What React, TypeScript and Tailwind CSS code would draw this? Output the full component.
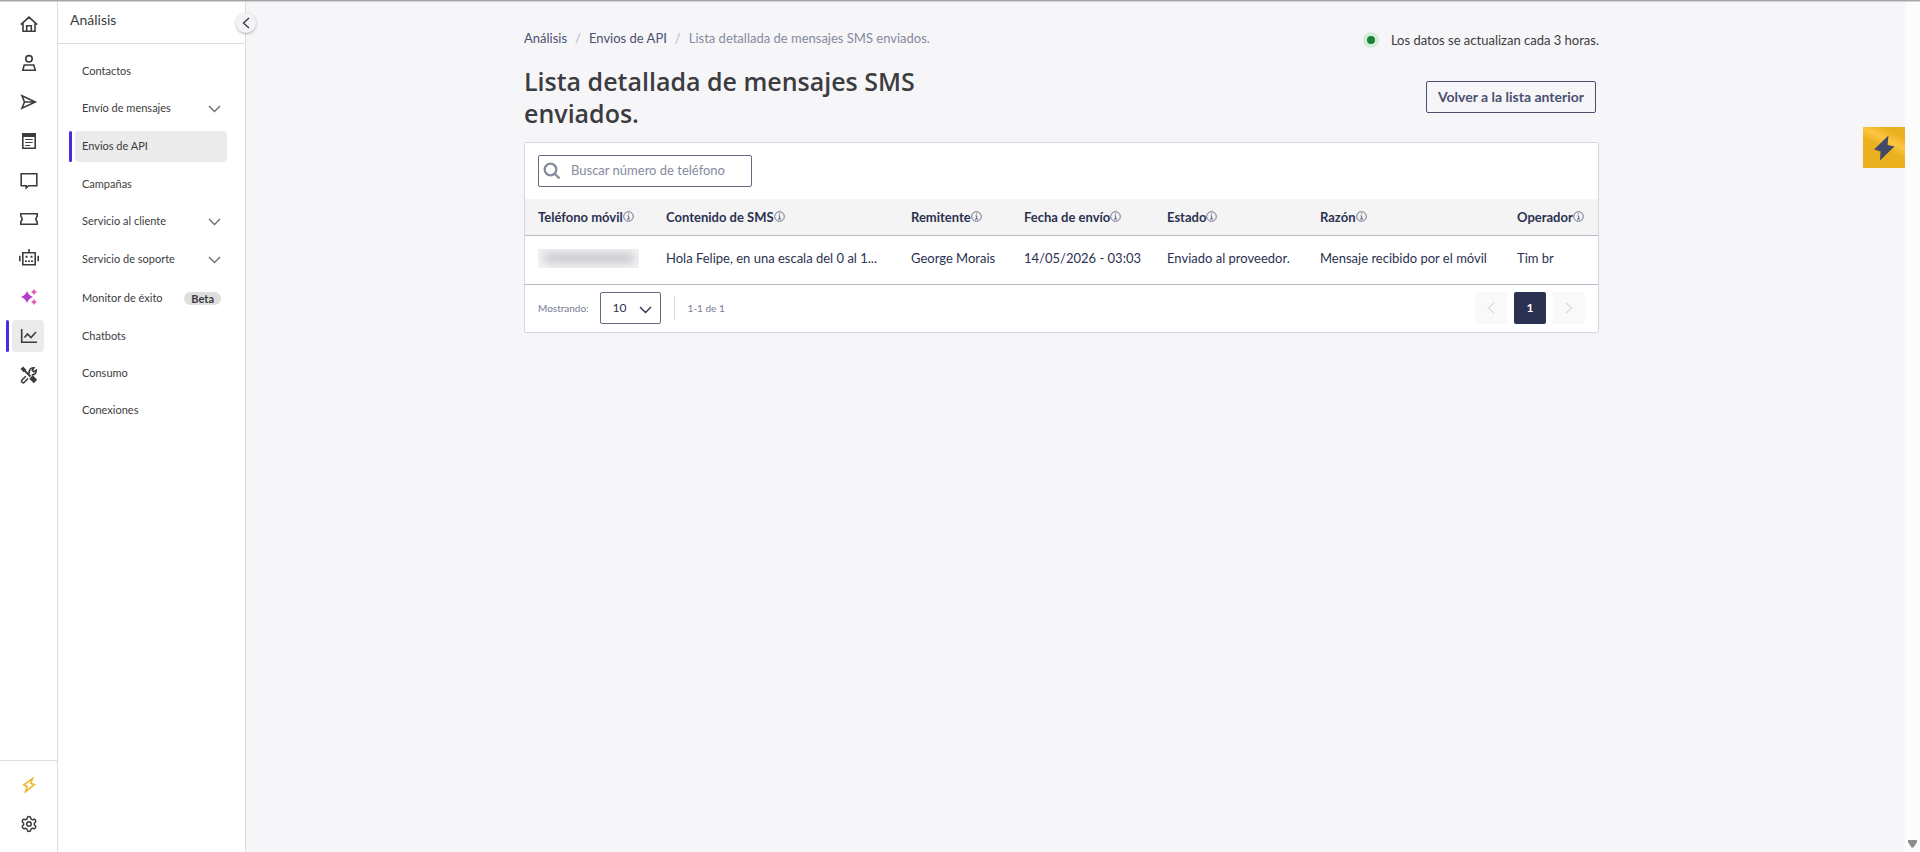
import type { ReactNode } from "react";
import { Settings } from "lucide-react";

function Glyph({ children }: { children: ReactNode }) {
  return (
    <svg width="20" height="20" viewBox="0 0 20 20" fill="none" stroke="currentColor" strokeWidth="1.6" aria-hidden="true">
      {children}
    </svg>
  );
}

const railItems: { label: string; icon: ReactNode; active?: boolean }[] = [
  {
    label: "Inicio",
    icon: (
      <Glyph>
        <path d="M1.8 10.6 10 3.2l8.2 7.4M4 9v8.3h12V9M7.7 17.3v-5.6h4.6v5.6" />
      </Glyph>
    ),
  },
  {
    label: "Contactos",
    icon: (
      <Glyph>
        <circle cx="10" cy="5.8" r="3.2" />
        <path d="M5.2 12h9.6l1.4 5.3H3.8z" />
      </Glyph>
    ),
  },
  {
    label: "Envíos",
    icon: (
      <Glyph>
        <path d="M3 3.8 16.3 10 3 16.2 5.5 10zM5.5 10h10.8" />
      </Glyph>
    ),
  },
  {
    label: "Campañas",
    icon: (
      <Glyph>
        <path d="M3.8 3v14.2h12.4V3" />
        <path d="M3 4h14" strokeWidth="4" />
        <path d="M6.3 8.5h7.4M6.3 11.500h7.4M6.3 14.500h4.800" strokeWidth="1.2" />
      </Glyph>
    ),
  },
  {
    label: "Conversaciones",
    icon: (
      <Glyph>
        <path d="M2.2 3.7h15.6v12H9.6L7.2 18v-2.3h-5z" />
      </Glyph>
    ),
  },
  {
    label: "Tickets",
    icon: (
      <Glyph>
        <path d="M1.8 4.7h16.4v2.6q-2.6 2.7 0 5.4v2.6H1.8v-2.6q2.6-2.7 0-5.4z" />
      </Glyph>
    ),
  },
  {
    label: "Chatbots",
    icon: (
      <Glyph>
        <path d="M3.8 4.8h12.4v11.9H3.8zM10 1v4" />
        <path d="M.8 7.8v5.4M19.2 7.8v5.4" />
        <path d="M6.5 8.7h2M11.5 8.7h2" strokeWidth="2" />
        <path d="M6 13.2h8" strokeDasharray="2 1" />
      </Glyph>
    ),
  },
  {
    label: "Inteligencia artificial",
    icon: (
      <Glyph>
        <g stroke="none">
          <path d="M8 4q1.500 4.500 6 6-4.500 1.500-6 6-1.500-4.500-6-6 4.500-1.500 6-6z" fill="#b03cc9" />
          <path d="M15 2q.8 2.200 3 3-2.200.8-3 3-.8-2.200-3-3 2.200-.8 3-3z" fill="#e45ab4" />
          <path d="M15 12q.8 2.200 3 3-2.200.8-3 3-.8-2.200-3-3 2.200-.8 3-3z" fill="#e45ab4" />
        </g>
      </Glyph>
    ),
  },
  {
    label: "Análisis",
    active: true,
    icon: (
      <Glyph>
        <path d="M2.700 3v13.300H18" />
        <path d="m5.500 11.500 3-3.500 3.500 3.500 5-5.500" />
      </Glyph>
    ),
  },
  {
    label: "Herramientas",
    icon: (
      <Glyph>
        <path d="M2.800 2.800 6 6" strokeWidth="3.600" />
        <path d="m5 5 6.500 6.500" strokeWidth="1.800" />
        <path d="m12 12 4.500 4.500" strokeWidth="4.800" />
        <path d="M8.600 9.600 10.400 7.800a4 4 0 0 1 4.500-5l-1.700 2.400 1.500 1.600 2.500-1.700a4 4 0 0 1-4.500 4.700M6.800 11.200 3 15a1.500 1.500 0 0 0 2.300 2.200l3.700-3.700" />
      </Glyph>
    ),
  },
];

const menuItems: { label: string; expandable?: boolean; active?: boolean; badge?: string }[] = [
  { label: "Contactos" },
  { label: "Envío de mensajes", expandable: true },
  { label: "Envios de API", active: true },
  { label: "Campañas" },
  { label: "Servicio al cliente", expandable: true },
  { label: "Servicio de soporte", expandable: true },
  { label: "Monitor de éxito", badge: "Beta" },
  { label: "Chatbots" },
  { label: "Consumo" },
  { label: "Conexiones" },
];

const columns = [
  { label: "Teléfono móvil", width: "w-[141px]" },
  { label: "Contenido de SMS", width: "w-[245px]" },
  { label: "Remitente", width: "w-[113px]" },
  { label: "Fecha de envío", width: "w-[143px]" },
  { label: "Estado", width: "w-[153px]" },
  { label: "Razón", width: "w-[197px]" },
  { label: "Operador", width: "" },
];

const row = [
  "Hola Felipe, en una escala del 0 al 1...",
  "George Morais",
  "14/05/2026 - 03:03",
  "Enviado al proveedor.",
  "Mensaje recibido por el móvil",
  "Tim br",
];

function itemHeight(item: { expandable?: boolean; active?: boolean; badge?: string }) {
  if (item.badge) return "h-8";
  return item.expandable || item.active ? "h-[31px]" : "h-[30px]";
}

function Chevron({ className }: { className?: string }) {
  return (
    <svg width="13" height="8" viewBox="0 0 13 8" fill="none" stroke="currentColor" strokeWidth="1.4" className={className} aria-hidden="true">
      <path d="m1 1 5.5 5.5L12 1" />
    </svg>
  );
}

function SideChevron({ right = false }: { right?: boolean }) {
  return (
    <svg width="8" height="12" viewBox="0 0 8 12" fill="none" stroke="currentColor" strokeWidth="1.4" aria-hidden="true">
      <path d={right ? "m1 1 5.5 5L1 11" : "M7 1 1.5 6 7 11"} />
    </svg>
  );
}

function InfoIcon() {
  return (
    <svg width="11" height="11" viewBox="0 0 11 11" fill="none" stroke="#5d6379" aria-hidden="true">
      <circle cx="5.5" cy="5.5" r="4.8" strokeWidth="0.9" />
      <path d="M4.500 4.900h1.200v3M4 8h3M5 2.900h1.100" />
    </svg>
  );
}

function Rail() {
  return (
    <nav aria-label="Principal" className="flex w-[58px] shrink-0 flex-col border-r border-[#dcdce2] bg-white">
      <ul className="flex flex-col gap-[7px] pt-[6px]">
        {railItems.map((item) => (
          <li key={item.label} className="flex gap-[3px] pl-[6px]">
            <span className={item.active ? "w-[3px] rounded-sm bg-[#4a2be0]" : "w-[3px]"} />
            <a
              href="#"
              aria-label={item.label}
              className={
                item.active
                  ? "flex size-8 items-center justify-center rounded bg-[#ebebeb] pl-[2px]"
                  : "flex size-8 items-center justify-center pl-[2px]"
              }
            >
              {item.icon}
            </a>
          </li>
        ))}
      </ul>
      <div className="mt-auto flex flex-col items-center gap-[7px] border-t border-[#dcdce2] pt-2 pb-3">
        <a href="#" aria-label="Novedades" className="flex size-8 items-center justify-center text-[#f0b428]">
          <Glyph>
            <path d="M13.500 3.700 4.800 9.900l3.200 1.600-1.300 5L15.300 9.600l-3.600-1.200z" />
          </Glyph>
        </a>
        <a href="#" aria-label="Configuración" className="flex size-8 items-center justify-center">
          <Settings size={18} strokeWidth={2} />
        </a>
      </div>
    </nav>
  );
}

function Sidebar() {
  return (
    <aside className="relative w-[188px] shrink-0 border-r border-[#dcdce2] bg-white">
      <h2 className="h-[42px] border-b border-[#dcdce2] pt-2 pl-3 text-sm leading-5">Análisis</h2>
      <ul className="flex flex-col gap-[7px] pt-3 pr-[18px] pl-[11px] text-[11px]">
        {menuItems.map((item) => (
          <li key={item.label} className={`flex gap-[3px] ${itemHeight(item)}`}>
            <span className={item.active ? "w-[3px] rounded-sm bg-[#4a2be0]" : "w-[3px]"} />
            <a
              href="#"
              className={
                item.active
                  ? "flex flex-1 items-center justify-between rounded bg-[#ebebeb] pr-[6px] pl-[7px]"
                  : "flex flex-1 items-center justify-between pr-[6px] pl-[7px]"
              }
            >
              {item.label}
              {item.expandable && <Chevron className="text-[#6d6d72]" />}
              {item.badge && (
                <span className="rounded-full bg-[#dedede] px-[7px] leading-[13px] font-bold">{item.badge}</span>
              )}
            </a>
          </li>
        ))}
      </ul>
      <button
        type="button"
        aria-label="Contraer menú"
        className="absolute top-[11px] -right-[11px] flex size-5 items-center justify-center rounded-full bg-[#f4f4f6] pr-px shadow-[0_1px_3px_rgba(0,0,0,0.3)]"
      >
        <SideChevron />
      </button>
    </aside>
  );
}

function MessagesCard() {
  return (
    <section className="rounded-xs border border-[#d5d6df] bg-white">
      <div className="px-[13px] py-3">
        <label className="flex h-8 w-[214px] items-center rounded-xs border border-[#656b85] pl-1">
          <svg width="18" height="18" viewBox="0 0 18 18" fill="none" stroke="#858a9e" strokeWidth="2.3" className="shrink-0" aria-hidden="true">
            <circle cx="7.5" cy="7.5" r="5.8" />
            <path d="m12 12 4.5 4.5" />
          </svg>
          <input
            type="search"
            aria-label="Buscar número de teléfono"
            placeholder="Buscar número de teléfono"
            className="ml-[10px] w-full min-w-0 text-[13px] outline-none placeholder:text-[#858a9e]"
          />
        </label>
      </div>
      <table className="w-full table-fixed text-left text-[13px] leading-5 text-[#2b3150]">
        <thead className="bg-[#f4f4f4]">
          <tr className="h-[36px] border-b border-[#b8bac8]">
            {columns.map((column) => (
              <th key={column.label} className={`${column.width} p-0 font-bold whitespace-nowrap first:pl-[13px]`}>
                <span className="flex items-center">
                  {column.label}
                  <InfoIcon />
                </span>
              </th>
            ))}
          </tr>
        </thead>
        <tbody>
          <tr className="h-[49px] border-b border-[#b8bac8]">
            <td className="p-0 pb-[3px] pl-[13px]">
              <div className="flex h-[19px] w-[101px] items-center overflow-hidden bg-[#f3f3f4]">
                <div className="mx-auto h-[10px] w-[90px] bg-[#c6c7cc] blur-[5px]" />
              </div>
            </td>
            {row.map((cell) => (
              <td key={cell} className="p-0 pb-[3px] whitespace-nowrap">
                {cell}
              </td>
            ))}
          </tr>
        </tbody>
      </table>
      <footer className="flex h-[47px] items-center px-[13px] text-[10px] text-[#777c92]">
        <label htmlFor="page-size">Mostrando:</label>
        <div className="relative ml-[11px]">
          <select
            id="page-size"
            defaultValue="10"
            className="block h-8 w-[61px] appearance-none rounded-xs border border-[#656b85] bg-white pl-3 text-xs text-[#2b3150]"
          >
            <option>10</option>
            <option>20</option>
            <option>50</option>
          </select>
          <Chevron className="pointer-events-none absolute top-[14px] right-[9px] text-[#2b3150]" />
        </div>
        <span className="ml-[13px] h-6 w-px bg-[#dcdce2]" />
        <span className="ml-[13px]">1-1 de 1</span>
        <div className="ml-auto flex items-center gap-[7px]">
          <button type="button" disabled aria-label="Anterior" className="flex size-8 items-center justify-center bg-[#f9f9f9] text-[#dddde0]">
            <SideChevron />
          </button>
          <button type="button" className="size-8 rounded-xs bg-[#2b3150] text-xs font-bold text-white">
            1
          </button>
          <button type="button" disabled aria-label="Siguiente" className="flex size-8 items-center justify-center bg-[#f9f9f9] text-[#dddde0]">
            <SideChevron right />
          </button>
        </div>
      </footer>
    </section>
  );
}

export default function App() {
  return (
    <div className="flex min-h-screen flex-col bg-[#f6f6f9] font-[Lato,'Open_Sans',sans-serif] text-[#3c3c40]">
      <div className="h-[2px] border-b border-[#d2d2d4] bg-[#a6a6a8]" />
      <div className="flex flex-1">
        <Rail />
        <Sidebar />
        <main className="relative min-w-0 flex-1 pr-7">
          <div className="mx-auto max-w-[1075px] pt-6">
            <div className="flex items-start justify-between text-[13px]">
              <nav aria-label="Ruta" className="flex items-center gap-2 leading-6 text-[#4a5070]">
                <a href="#">Análisis</a>
                <span className="text-[#b4b7c4]">/</span>
                <a href="#">Envios de API</a>
                <span className="text-[#b4b7c4]">/</span>
                <span className="text-[#858a9e]">Lista detallada de mensajes SMS enviados.</span>
              </nav>
              <p className="flex items-center gap-3 leading-7">
                <span className="size-4 rounded-full border-4 border-[#d3ecd9] bg-[#1e8035]" />
                Los datos se actualizan cada 3 horas.
              </p>
            </div>
            <div className="flex items-center justify-between pt-[11px] pb-[13px]">
              <h1 className="max-w-[450px] font-['Open_Sans',sans-serif] text-[25px] leading-8 font-semibold">
                Lista detallada de mensajes SMS enviados.
              </h1>
              <button type="button" className="mr-[3px] h-8 rounded-xs border border-[#4a5070] px-[11px] text-sm font-bold text-[#4a5070]">
                Volver a la lista anterior
              </button>
            </div>
            <MessagesCard />
          </div>
          <button
            type="button"
            aria-label="Accesos rápidos"
            className="absolute top-[125px] right-0 flex h-[41px] w-[42px] items-center justify-center bg-[linear-gradient(27deg,#ebb01e_48%,#fdc642_65%,#ebb01e_82%)]"
          >
            <svg width="22" height="26" viewBox="0 0 22 26" fill="#434a68" aria-hidden="true">
              <path d="M15.500.5 1 14.500l6.500 2-.5 9L21.500 11.500l-7-1.500z" />
            </svg>
          </button>
        </main>
        <div className="flex w-[15px] shrink-0 items-end justify-center bg-[#fcfcfc] pb-1">
          <svg width="9" height="8" viewBox="0 0 9 8" fill="#8b8b8b" aria-hidden="true">
            <path d="M0 0h9v2L5.500 7.500h-2L0 2z" />
          </svg>
        </div>
      </div>
    </div>
  );
}
